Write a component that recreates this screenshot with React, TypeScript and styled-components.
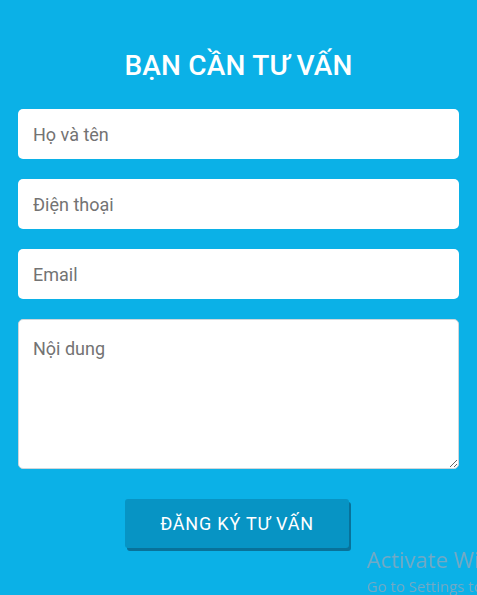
import React from "react";
import styled, { createGlobalStyle } from "styled-components";

const Global = createGlobalStyle`
  html, body { margin: 0; padding: 0; background: #0bb1e7; height: 100%; overflow: hidden; }
  * { box-sizing: border-box; }
`;

const Page = styled.div`
  width: 477px;
  height: 595px;
  background: #0bb1e7;
  font-family: Roboto, "Liberation Sans", sans-serif;
  padding: 48px 18px 0 18px;
`;

const Title = styled.h2`
  margin: 0 0 25px 0;
  text-align: center;
  color: #fff;
  font-size: 28px;
  font-weight: 500;
  line-height: 36px;
  letter-spacing: 0.2px;
`;

const Form = styled.form`
  display: flex;
  flex-direction: column;
  gap: 20px;
`;

const Field = styled.input`
  width: 441px;
  height: 50px;
  border: none;
  border-radius: 5px;
  background: #fff;
  padding: 0 15px;
  font-family: Roboto, "Liberation Sans", sans-serif;
  font-size: 18px;
  font-weight: 400;
  color: #333;
  outline: none;
  &::placeholder { color: #737373; }
`;

const Area = styled.textarea`
  width: 441px;
  height: 150px;
  border: 1px solid #cfd6da;
  border-radius: 5px;
  background: #fff;
  padding: 18px 14px;
  font-family: Roboto, "Liberation Sans", sans-serif;
  font-size: 18px;
  color: #333;
  outline: none;
  resize: both;
  &::placeholder { color: #737373; }
`;

const ButtonRow = styled.div`
  display: flex;
  justify-content: center;
  margin-top: 10px;
  padding-right: 3px;
`;

const Submit = styled.button`
  width: 224px;
  height: 49px;
  border: none;
  border-radius: 3px;
  background: #0794c4;
  box-shadow: 2px 3px 0 #08729a;
  color: #fff;
  font-family: Roboto, "Liberation Sans", sans-serif;
  font-size: 18px;
  font-weight: 400;
  letter-spacing: 0.8px;
  cursor: pointer;
`;

const Watermark = styled.div`
  position: fixed;
  left: 367px;
  top: 544px;
  color: #72a9c6;
  font-family: "Open Sans", "Liberation Sans", sans-serif;
  white-space: nowrap;
  pointer-events: none;
`;

const WmTitle = styled.div`
  font-size: 22px;
  line-height: 30px;
`;

const WmSub = styled.div`
  font-size: 15px;
  line-height: 20px;
  margin-top: 2px;
`;

export default function App() {
  return (
    <Page>
      <Global />
      <Title>BẠN CẦN TƯ VẤN</Title>
      <Form onSubmit={(e) => e.preventDefault()}>
        <Field placeholder="Họ và tên" />
        <Field placeholder="Điện thoại" />
        <Field placeholder="Email" />
        <Area placeholder="Nội dung" />
        <ButtonRow>
          <Submit type="submit">ĐĂNG KÝ TƯ VẤN</Submit>
        </ButtonRow>
      </Form>
      <Watermark>
        <WmTitle>Activate Windows</WmTitle>
        <WmSub>Go to Settings to activate Windows.</WmSub>
      </Watermark>
    </Page>
  );
}
